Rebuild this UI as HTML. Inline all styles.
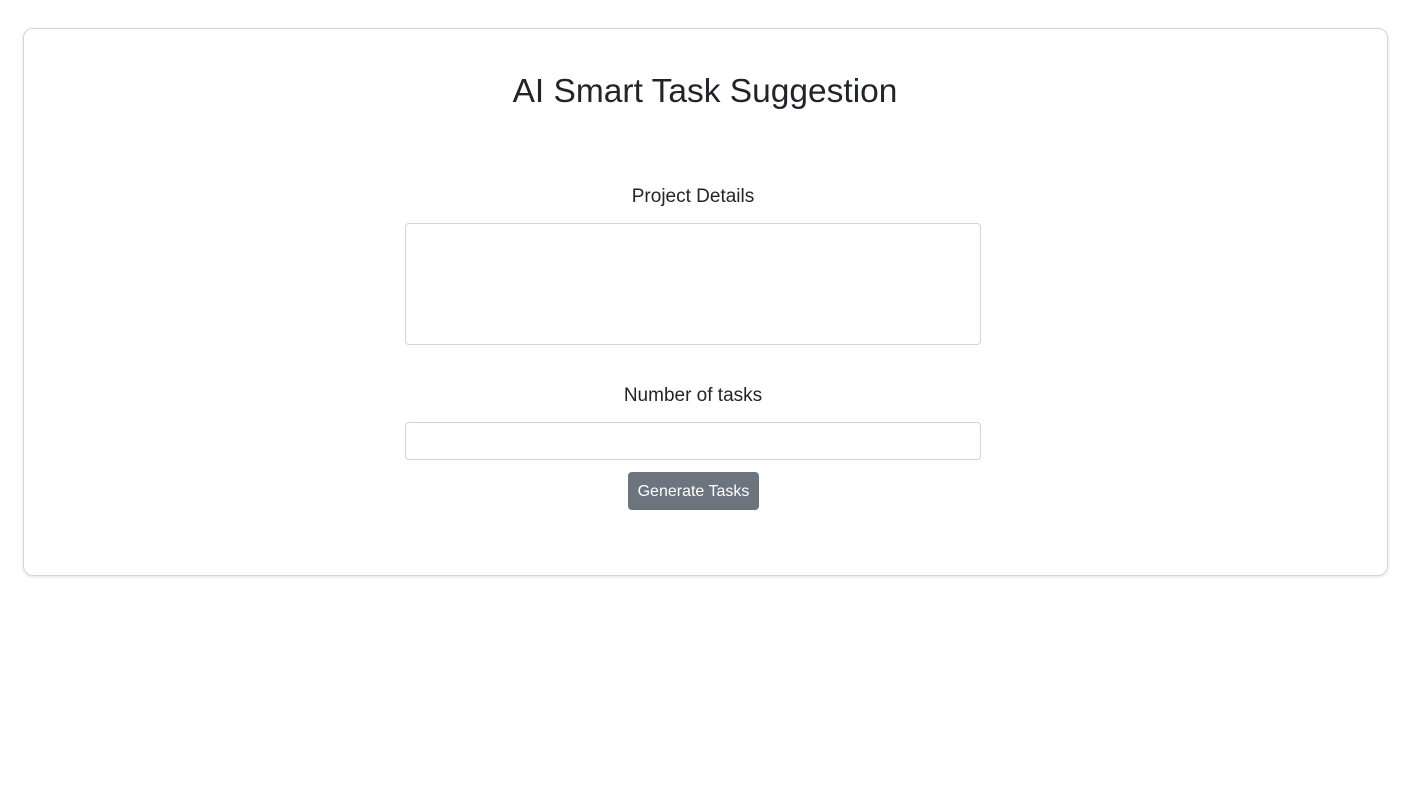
<!DOCTYPE html>
<html><head><meta charset="utf-8"><style>
html,body{margin:0;padding:0;background:#fff;width:1413px;height:796px;overflow:hidden;font-family:"Liberation Sans",sans-serif;color:#212529}
.card{position:absolute;left:23px;top:28px;width:1365px;height:548px;border:1px solid #d5d5d5;border-radius:10px;box-shadow:0 1px 3px rgba(0,0,0,.12);box-sizing:border-box}
h1{position:absolute;left:0;top:71px;margin:0;text-align:center;font-weight:400;font-size:33.5px;line-height:42px}
.lbl{position:absolute;left:0;width:1386px;text-align:center;font-size:19px;line-height:22px}
.box{position:absolute;left:405px;width:576px;border:1px solid #ced4da;border-radius:4px;box-sizing:border-box;background:#fff}
.btn{position:absolute;left:628px;top:472px;width:131px;height:38px;background:#6c757d;color:#fff;border-radius:4px;font-size:16px;line-height:40px;text-align:center}
</style></head><body>
<div class="card"></div>
<h1 style="width:1410px">AI Smart Task Suggestion</h1>
<div class="lbl" style="top:186px">Project Details</div>
<div class="box" style="top:223px;height:122px"></div>
<div class="lbl" style="top:385px">Number of tasks</div>
<div class="box" style="top:422px;height:38px"></div>
<div class="btn">Generate Tasks</div>
</body></html>
